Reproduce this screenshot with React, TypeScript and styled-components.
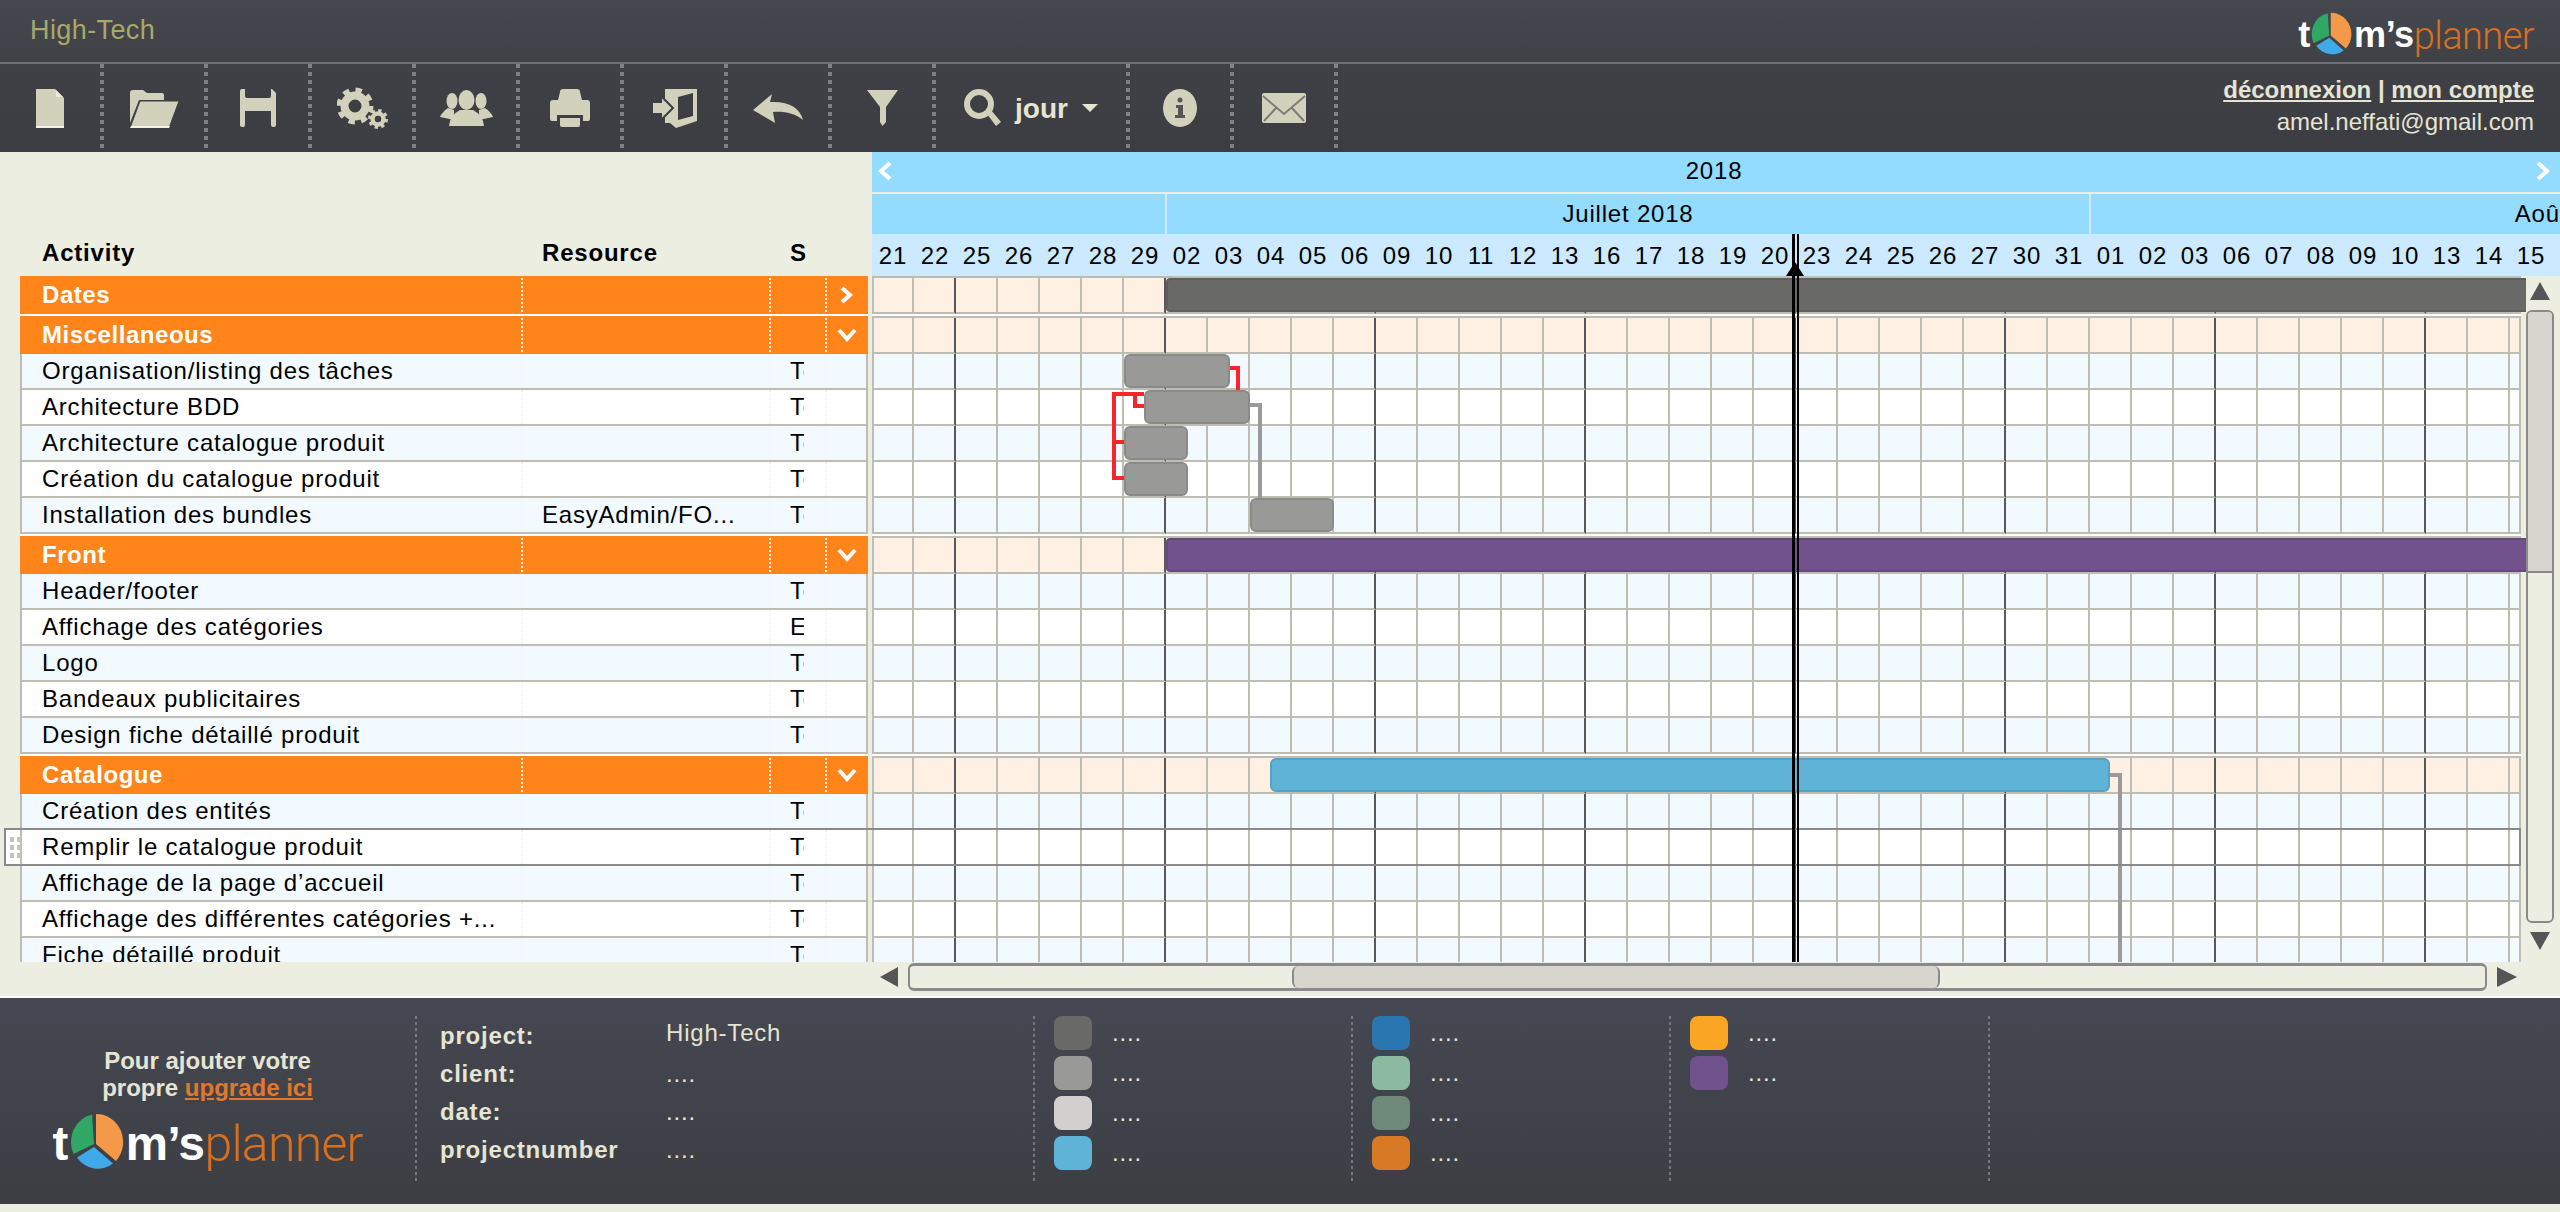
import React from "react";
import styled, { createGlobalStyle } from "styled-components";

const beige = "#edeee2";
const gridLine = "#bdbdb3";
const iconColor = "#d2d1bb";
const cream = "#e6e4d3";

const GlobalStyle = createGlobalStyle`
  html, body { margin: 0; padding: 0; background: ${beige}; }
  * { box-sizing: border-box; }
  body { font-family: "Liberation Sans", Arial, sans-serif; letter-spacing: 0.8px; }
`;

const DAYS = [
  "21", "22", "25", "26", "27", "28", "29", "02", "03", "04", "05", "06", "09", "10",
  "11", "12", "13", "16", "17", "18", "19", "20", "23", "24", "25", "26", "27", "30",
  "31", "01", "02", "03", "06", "07", "08", "09", "10", "13", "14", "15",
];

type Task = { name: string; resource?: string; status?: string };
type Section = { name: string; open: boolean; tasks: Task[] };

const SECTIONS: Section[] = [
  { name: "Dates", open: false, tasks: [] },
  {
    name: "Miscellaneous",
    open: true,
    tasks: [
      { name: "Organisation/listing des tâches" },
      { name: "Architecture BDD" },
      { name: "Architecture catalogue produit" },
      { name: "Création du catalogue produit" },
      { name: "Installation des bundles", resource: "EasyAdmin/FO..." },
    ],
  },
  {
    name: "Front",
    open: true,
    tasks: [
      { name: "Header/footer" },
      { name: "Affichage des catégories", status: "En cours" },
      { name: "Logo" },
      { name: "Bandeaux publicitaires" },
      { name: "Design fiche détaillé produit" },
    ],
  },
  {
    name: "Catalogue",
    open: true,
    tasks: [
      { name: "Création des entités" },
      { name: "Remplir le catalogue produit" },
      { name: "Affichage de la page d’accueil" },
      { name: "Affichage des différentes catégories +..." },
      { name: "Fiche détaillé produit" },
    ],
  },
];

// positions are relative to the chart area, that is the place of the bar on the canvas
const BARS = [
  { x: 294, y: 2, w: 1360, color: "#696967", border: "#5f5f5d", open: true },
  { x: 252, y: 78, w: 106, color: "#999997", border: "#8a8a88" },
  { x: 272, y: 114, w: 106, color: "#999997", border: "#8a8a88" },
  { x: 252, y: 150, w: 64, color: "#999997", border: "#8a8a88" },
  { x: 252, y: 186, w: 64, color: "#999997", border: "#8a8a88" },
  { x: 378, y: 222, w: 84, color: "#999997", border: "#8a8a88" },
  { x: 294, y: 262, w: 1360, color: "#72528d", border: "#664a7e", open: true },
  { x: 398, y: 482, w: 840, color: "#5eb3d7", border: "#55a3c4" },
];

const LEGEND = [
  ["#696967", "#999997", "#d1d0cf", "#5eb3d7"],
  ["#2a76b1", "#8bbaa1", "#6f8a7b", "#d87a25"],
  ["#fba524", "#72528d"],
  [],
];

const Page = styled.div`
  width: 2560px;
  height: 1212px;
  overflow: hidden;
  background: ${beige};
  display: flex;
  flex-direction: column;
`;

const TitleBar = styled.header`
  height: 64px;
  flex: none;
  display: flex;
  align-items: flex-start;
  justify-content: space-between;
  padding: 12px 26px 0 30px;
  background: linear-gradient(#45484f, #3f4146);
  border-bottom: 2px solid #6e7074;
`;

const ProjectName = styled.div`
  color: #a9a868;
  font-size: 27px;
  line-height: 36px;
  letter-spacing: 0.4px;
`;

const LogoWrap = styled.div<{ $size: number }>`
  display: inline-flex;
  align-items: center;
  height: ${({ $size }) => $size * 1.16}px;
  font-size: ${({ $size }) => $size}px;
  line-height: 1;
  letter-spacing: 0;
  white-space: nowrap;
  svg {
    width: 1.1em;
    height: 1.16em;
    margin: 0 0.02em 0 0.04em;
    flex: none;
  }
`;

const LogoBold = styled.span`
  color: #fff;
  font-size: 0.95em;
  font-weight: 700;
  letter-spacing: -0.01em;
  margin-top: 0.08em;
`;

const LogoLight = styled.span`
  color: #d8701f;
  font-family: Roboto, "Liberation Sans", sans-serif;
  font-weight: 300;
  letter-spacing: -0.015em;
  margin-top: 0.08em;
`;

const Logo: React.FC<{ size: number }> = ({ size }) => (
  <LogoWrap $size={size}>
    <LogoBold>t</LogoBold>
    <svg viewBox="0 0 55 58">
      <path d="M24 31L22 1.5A26 28 0 0 0 3.5 41Z" fill="#2fa866" />
      <path d="M26 31L26 1A27 28 0 0 1 46 48Z" fill="#f4994a" />
      <path d="M24 34L7 44.5A26 28 0 0 0 43 50.5Z" fill="#3fa9ea" />
    </svg>
    <LogoBold>m’s</LogoBold>
    <LogoLight>planner</LogoLight>
  </LogoWrap>
);

const Toolbar = styled.div`
  height: 88px;
  flex: none;
  display: flex;
  align-items: stretch;
  background: linear-gradient(#3f4147, #3c3d42);
`;

const ToolButton = styled.div<{ $width?: number }>`
  width: ${({ $width }) => $width ?? 104}px;
  flex: none;
  display: flex;
  align-items: center;
  justify-content: center;
  gap: 14px;
  padding-right: 4px;
  background-image: linear-gradient(#7e8083 50%, transparent 50%);
  background-size: 4px 8px;
  background-position: right top;
  background-repeat: repeat-y;
  svg { fill: ${iconColor}; flex: none; }
`;

const ViewLabel = styled.span`
  color: ${cream};
  font-size: 28px;
  font-weight: 700;
  letter-spacing: 0;
  margin-top: 2px;
`;

const Caret = styled.span`
  width: 0;
  height: 0;
  border-left: 8px solid transparent;
  border-right: 8px solid transparent;
  border-top: 8px solid ${cream};
`;

const Account = styled.div`
  margin-left: auto;
  padding: 10px 26px 0 0;
  text-align: right;
  color: ${cream};
  font-size: 24px;
  line-height: 32px;
  letter-spacing: 0;
`;

const AccountLink = styled.a`
  font-weight: 700;
  text-decoration: underline;
`;

const AccountSep = styled.span`
  font-weight: 700;
`;

const Main = styled.main`
  position: relative;
  height: 844px;
  flex: none;
  display: flex;
`;

const LeftPane = styled.div`
  width: 872px;
  flex: none;
`;

const ColumnHeads = styled.div`
  height: 124px;
  padding: 0 4px 7px 22px;
  display: grid;
  grid-template-columns: 499px 248px 56px 41px;
  align-items: end;
  font-size: 24px;
  font-weight: 700;
  line-height: 32px;
  color: #000;
`;

const HeadCell = styled.div<{ $pad?: number }>`
  padding-left: ${({ $pad }) => $pad ?? 0}px;
`;

const Tree = styled.div`
  margin-left: 20px;
  width: 848px;
  height: 686px;
  overflow: hidden;
  background: #fff;
`;

const SectionWrap = styled.div`
  margin-bottom: 2px;
`;

const GroupRow = styled.div`
  height: 38px;
  display: grid;
  grid-template-columns: 499px 248px 56px 41px;
  align-items: stretch;
  border: solid #ff851b;
  border-width: 0 2px;
  background: #ff851b;
  color: #fff;
  font-size: 24px;
  font-weight: 700;
  letter-spacing: 0.55px;
  line-height: 38px;
`;

const TaskRow = styled.div<{ $odd: boolean }>`
  height: 36px;
  display: grid;
  grid-template-columns: 499px 248px 56px 41px;
  border: solid ${gridLine};
  border-width: 0 2px 2px;
  background: ${({ $odd }) => ($odd ? "#f2faff" : "#fff")};
  color: #000;
  font-size: 24px;
  line-height: 34px;
`;

const NameCell = styled.div`
  padding-left: 20px;
  white-space: nowrap;
  overflow: hidden;
`;

const GroupDivided = styled.div`
  margin: 2px 0;
  line-height: 34px;
  border-left: 2px dotted #fff;
  display: flex;
  align-items: center;
  justify-content: center;
`;

const TaskDivided = styled.div`
  border-left: 2px dotted #f3f6f6;
  padding-left: 19px;
  white-space: nowrap;
  overflow: hidden;
`;

const StatusText = styled.div`
  width: 14px;
  overflow: hidden;
  white-space: nowrap;
`;

const RightPane = styled.div`
  width: 1688px;
  flex: none;
  display: flex;
  flex-direction: column;
`;

const YearRow = styled.div`
  height: 42px;
  flex: none;
  display: flex;
  align-items: center;
  justify-content: space-between;
  padding: 0 10px 2px 6px;
  background: #93dbff;
  border-bottom: 2px solid ${beige};
  font-size: 24px;
  line-height: 40px;
  color: #000;
`;

const MonthRow = styled.div`
  height: 40px;
  flex: none;
  display: flex;
  overflow: hidden;
  background: #93dbff;
`;

const MonthCell = styled.div<{ $width: number }>`
  width: ${({ $width }) => $width}px;
  flex: none;
  text-align: center;
  font-size: 24px;
  line-height: 40px;
  color: #000;
  & + & { border-left: 2px solid #cfeaf9; }
`;

const DayRow = styled.div`
  height: 42px;
  flex: none;
  display: flex;
  overflow: hidden;
  background: #cbe9ff;
`;

const DayCell = styled.div`
  width: 42px;
  flex: none;
  text-align: center;
  font-size: 24px;
  line-height: 44px;
  color: #000;
`;

const ChartRow = styled.div`
  height: 686px;
  flex: none;
  display: flex;
`;

const Chart = styled.div`
  position: relative;
  width: 1649px;
  height: 686px;
  overflow: hidden;
  background: #fff;
  flex: none;
`;

const Track = styled.div<{ $group?: boolean }>`
  height: ${({ $group }) => ($group ? 38 : 36)}px;
  display: flex;
  border-top: ${({ $group }) => ($group ? `2px solid ${gridLine}` : "none")};
`;

const Cell = styled.div<{ $bg: string; $week: boolean }>`
  width: 42px;
  flex: none;
  background: ${({ $bg }) => $bg};
  border-right: 2px solid ${({ $week }) => ($week ? "#58585a" : gridLine)};
  border-bottom: 2px solid ${gridLine};
  &:first-child { border-left: 2px solid ${gridLine}; }
  &:last-child { width: 11px; border-right-color: ${gridLine}; }
`;

const Bar = styled.div<{ $x: number; $y: number; $w: number; $color: string; $border: string; $open?: boolean }>`
  position: absolute;
  left: ${({ $x }) => $x}px;
  top: ${({ $y }) => $y}px;
  width: ${({ $w }) => $w}px;
  height: 34px;
  background: ${({ $color }) => $color};
  border: 2px solid ${({ $border }) => $border};
  border-right-width: ${({ $open }) => ($open ? 0 : 2)}px;
  border-radius: ${({ $open }) => ($open ? "4px 0 0 4px" : "6px")};
`;

const ChartBars = styled.div`
  position: absolute;
  left: 872px;
  top: 124px;
  width: 1654px;
  height: 686px;
`;

const Links = styled.svg`
  position: absolute;
  left: 0;
  top: 0;
  fill: none;
  stroke-width: 4;
`;

const VScroll = styled.div`
  width: 39px;
  flex: none;
  display: flex;
  flex-direction: column;
  align-items: center;
  padding: 6px 2px 12px 0;
  background: ${beige};
`;

const ArrowUp = styled.span`
  flex: none;
  width: 0;
  height: 0;
  border-left: 10px solid transparent;
  border-right: 10px solid transparent;
  border-bottom: 18px solid #555558;
`;

const ArrowDown = styled.span`
  flex: none;
  width: 0;
  height: 0;
  border-left: 10px solid transparent;
  border-right: 10px solid transparent;
  border-top: 18px solid #555558;
`;

const ArrowLeft = styled.span`
  flex: none;
  width: 0;
  height: 0;
  border-top: 10px solid transparent;
  border-bottom: 10px solid transparent;
  border-right: 18px solid #555558;
`;

const ArrowRight = styled.span`
  flex: none;
  width: 0;
  height: 0;
  border-top: 10px solid transparent;
  border-bottom: 10px solid transparent;
  border-left: 20px solid #555558;
`;

const VTrack = styled.div`
  flex: 1;
  width: 28px;
  margin: 10px 0 9px;
  border: 2px solid #8a8a8a;
  border-radius: 6px;
  overflow: hidden;
`;

const VThumb = styled.div`
  height: 261px;
  background: #d6d6ce;
  border-bottom: 2px solid #8a8a8a;
`;

const HScroll = styled.div`
  height: 34px;
  flex: none;
  display: flex;
  align-items: center;
  gap: 10px;
  padding: 0 0 4px 8px;
`;

const HTrack = styled.div`
  width: 1579px;
  height: 28px;
  flex: none;
  display: flex;
  border: 1px solid #8a8a8a;
  border-width: 3px 2px;
  border-radius: 6px;
  overflow: hidden;
`;

const HThumb = styled.div`
  width: 648px;
  margin-left: 382px;
  background: #d6d6ce;
  border: solid #8a8a8a;
  border-width: 0 2px;
  border-radius: 6px;
`;

const RowFocus = styled.div`
  position: absolute;
  left: 4px;
  top: 676px;
  width: 2517px;
  height: 38px;
  border: 2px solid #8a8a8a;
  z-index: 3;
`;

const DragHandle = styled.div`
  position: absolute;
  left: 0;
  top: 0;
  width: 14px;
  height: 34px;
  background: #fff;
  display: grid;
  grid-template-columns: 4px 4px;
  grid-auto-rows: 5px;
  column-gap: 3px;
  row-gap: 3px;
  padding: 7px 0 0 4px;
`;

const DragDot = styled.span`
  background: #c4c4be;
`;

const TodayLine = styled.div`
  position: absolute;
  left: 1792px;
  top: 82px;
  width: 7px;
  height: 728px;
  border-left: 3px solid #000;
  border-right: 2px solid #000;
  z-index: 4;
`;

const TodayMark = styled.div`
  position: absolute;
  left: 1786px;
  top: 110px;
  width: 0;
  height: 0;
  border-left: 9px solid transparent;
  border-right: 9px solid transparent;
  border-bottom: 14px solid #000;
  z-index: 4;
`;

const Footer = styled.footer`
  height: 208px;
  flex: none;
  display: flex;
  align-items: flex-start;
  border-top: 2px solid #fff;
  padding-top: 18px;
  background: linear-gradient(#454852, #3c3e43);
`;

const Promo = styled.div`
  width: 415px;
  flex: none;
  margin-top: 31px;
  display: flex;
  flex-direction: column;
  align-items: center;
  color: ${cream};
  font-size: 24px;
  font-weight: 700;
  letter-spacing: 0;
  line-height: 27px;
`;

const PromoLink = styled.a`
  color: #e4772a;
  text-decoration: underline;
`;

const PromoLogo = styled.div`
  margin-top: 12px;
`;

const FooterCol = styled.div<{ $width: number }>`
  width: ${({ $width }) => $width}px;
  height: 166px;
  flex: none;
  background-image: linear-gradient(#75777a 50%, transparent 50%);
  background-size: 2px 6px;
  background-repeat: repeat-y;
  background-position: left top;
`;

const InfoGrid = styled.div`
  display: grid;
  grid-template-columns: 226px 1fr;
  grid-auto-rows: 38px;
  padding: 1px 0 0 25px;
  color: ${cream};
  font-size: 24px;
  line-height: 38px;
`;

const InfoLabel = styled.div`
  font-weight: 700;
`;

const InfoValue = styled.div<{ $raised?: boolean }>`
  margin-top: ${({ $raised }) => ($raised ? -3 : 0)}px;
`;

const LegendList = styled.div`
  display: flex;
  flex-direction: column;
  gap: 6px;
  padding-left: 21px;
`;

const LegendItem = styled.div`
  height: 34px;
  display: flex;
  align-items: center;
  gap: 20px;
  color: ${cream};
  font-size: 24px;
`;

const Swatch = styled.span<{ $color: string }>`
  width: 38px;
  height: 34px;
  flex: none;
  border-radius: 8px;
  background: ${({ $color }) => $color};
`;

const Chevron: React.FC<{ dir: "left" | "right" | "down"; w: number; h: number }> = ({ dir, w, h }) => {
  const pts =
    dir === "left"
      ? `${w - 2},2 3,${h / 2} ${w - 2},${h - 2}`
      : dir === "right"
      ? `2,2 ${w - 3},${h / 2} 2,${h - 2}`
      : `2,2 ${w / 2},${h - 3} ${w - 2},2`;
  return (
    <svg width={w} height={h} viewBox={`0 0 ${w} ${h}`}>
      <polyline points={pts} fill="none" stroke="#fff" strokeWidth="4" />
    </svg>
  );
};

const gearTeeth = { fill: "none", stroke: iconColor };

const ToolIcons = {
  file: (
    <svg width="28" height="39" viewBox="0 0 28 39">
      <path d="M0 0H19L28 9V39H0Z" />
      <path d="M20 1V8H27Z" fill="#ecebdd" />
      <path d="M0 37H28V39H0Z" fill="#f3f2e8" />
    </svg>
  ),
  folder: (
    <svg width="50" height="39" viewBox="0 0 50 39">
      <path d="M1 4Q1 1 4 1H14L18 4H33Q35 4 35 6V11H10L1 34Z" />
      <path d="M11 12H50L40 39H1Z" stroke="#3f4146" strokeWidth="1" />
      <path d="M2 37H41L40 39H1Z" fill="#f3f2e8" />
    </svg>
  ),
  save: (
    <svg width="36" height="38" viewBox="0 0 36 38">
      <path d="M0 2Q0 0 2 0H5V7Q5 9 7 9H29Q31 9 31 7V0H32L36 4V36Q36 38 33 38Q31 38 31 36V22H5V36Q5 38 3 38Q0 38 0 36Z" />
    </svg>
  ),
  gears: (
    <svg width="51" height="42" viewBox="0 0 51 42">
      <circle cx="18" cy="19" r="10.5" fill="none" stroke={iconColor} strokeWidth="8" />
      <circle cx="18" cy="19" r="16" {...gearTeeth} strokeWidth="5" strokeDasharray="6.3 6.27" />
      <circle cx="41" cy="32" r="5.5" fill="none" stroke={iconColor} strokeWidth="4.5" />
      <circle cx="41" cy="32" r="8.5" {...gearTeeth} strokeWidth="3" strokeDasharray="3.3 3.37" />
    </svg>
  ),
  people: (
    <svg width="53" height="36" viewBox="0 0 53 36">
      <ellipse cx="12" cy="11" rx="5.500" ry="8" />
      <ellipse cx="41" cy="11" rx="5.500" ry="8" />
      <path d="M0 27Q2 22 8 18L14 20L14 30Z" />
      <path d="M53 27Q51 22 45 18L39 20L39 30Z" />
      <ellipse cx="26.500" cy="10" rx="8" ry="10" />
      <path d="M9 36Q10 25 20 20H33Q43 25 44 36Z" />
    </svg>
  ),
  printer: (
    <svg width="40" height="38" viewBox="0 0 40 38">
      <path d="M10 3Q10 0 13 0H27Q30 0 30 3L33 15H7Z" />
      <path d="M3 11H37Q40 11 40 14V30Q40 32 38 32H33V26H7V32H2Q0 32 0 30V14Q0 11 3 11Z" />
      <path d="M10 29H30V36Q30 38 28 38H12Q10 38 10 36Z" />
    </svg>
  ),
  door: (
    <svg width="45" height="40" viewBox="0 0 45 40">
      <path d="M13 1H45V33L24 40L18 35H13ZM26 9L41 5V28L26 32Z" fillRule="evenodd" />
      <path d="M0 14H9V8L21 20L9 32V26H0Z" stroke="#3d3e43" strokeWidth="2" />
    </svg>
  ),
  undo: (
    <svg width="50" height="29" viewBox="0 0 50 29">
      <path d="M0 16L19 0L17 8C36 7 47 14 50 26C42 19 30 17 20 18L22 29Z" />
    </svg>
  ),
  filter: (
    <svg width="31" height="36" viewBox="0 0 31 36">
      <path d="M0 0H31L19 17V32L15.500 36L13 32V17Z" />
    </svg>
  ),
  search: (
    <svg width="37" height="38" viewBox="0 0 37 38">
      <circle cx="15" cy="15" r="12" fill="none" stroke={iconColor} strokeWidth="6" />
      <path d="M23 25L32 37L37 33L27 21Z" />
    </svg>
  ),
  info: (
    <svg width="34" height="38" viewBox="0 0 34 38">
      <ellipse cx="17" cy="19" rx="17" ry="19" />
      <circle cx="17" cy="11" r="2.500" fill="#55565a" />
      <path d="M13 16H20V26H22V29H12V26H15V19H13Z" fill="#55565a" />
    </svg>
  ),
  mail: (
    <svg width="44" height="30" viewBox="0 0 44 30">
      <rect width="44" height="30" rx="2" />
      <path d="M1 3L22 21L43 3M2 28L15 14M42 28L29 14" fill="none" stroke="#7b7c78" strokeWidth="2" />
    </svg>
  ),
};

const App: React.FC = () => (
  <Page>
    <GlobalStyle />
    <TitleBar>
      <ProjectName>High-Tech</ProjectName>
      <Logo size={38} />
    </TitleBar>

    <Toolbar>
      <ToolButton>{ToolIcons.file}</ToolButton>
      <ToolButton>{ToolIcons.folder}</ToolButton>
      <ToolButton>{ToolIcons.save}</ToolButton>
      <ToolButton>{ToolIcons.gears}</ToolButton>
      <ToolButton>{ToolIcons.people}</ToolButton>
      <ToolButton>{ToolIcons.printer}</ToolButton>
      <ToolButton>{ToolIcons.door}</ToolButton>
      <ToolButton>{ToolIcons.undo}</ToolButton>
      <ToolButton>{ToolIcons.filter}</ToolButton>
      <ToolButton $width={194}>
        {ToolIcons.search}
        <ViewLabel>jour</ViewLabel>
        <Caret />
      </ToolButton>
      <ToolButton>{ToolIcons.info}</ToolButton>
      <ToolButton>{ToolIcons.mail}</ToolButton>
      <Account>
        <div>
          <AccountLink>déconnexion</AccountLink> <AccountSep>|</AccountSep> <AccountLink>mon compte</AccountLink>
        </div>
        <div>amel.neffati@gmail.com</div>
      </Account>
    </Toolbar>

    <Main>
      <LeftPane>
        <ColumnHeads>
          <HeadCell $pad={20}>Activity</HeadCell>
          <HeadCell $pad={21}>Resource</HeadCell>
          <HeadCell $pad={21}>S</HeadCell>
          <HeadCell />
        </ColumnHeads>
        <Tree>
          {SECTIONS.map((section) => (
            <SectionWrap key={section.name}>
              <GroupRow>
                <NameCell>{section.name}</NameCell>
                <GroupDivided />
                <GroupDivided />
                <GroupDivided>
                  {section.open ? <Chevron dir="down" w={20} h={14} /> : <Chevron dir="right" w={13} h={18} />}
                </GroupDivided>
              </GroupRow>
              {section.tasks.map((task, i) => (
                <TaskRow key={task.name} $odd={i % 2 === 0}>
                  <NameCell>{task.name}</NameCell>
                  <TaskDivided>{task.resource}</TaskDivided>
                  <TaskDivided>
                    <StatusText>{task.status ?? "Terminé"}</StatusText>
                  </TaskDivided>
                  <TaskDivided />
                </TaskRow>
              ))}
            </SectionWrap>
          ))}
        </Tree>
      </LeftPane>

      <RightPane>
        <YearRow>
          <Chevron dir="left" w={14} h={20} />
          <span>2018</span>
          <Chevron dir="right" w={14} h={20} />
        </YearRow>
        <MonthRow>
          <MonthCell $width={293} />
          <MonthCell $width={924}>Juillet 2018</MonthCell>
          <MonthCell $width={966}>Août 2018</MonthCell>
        </MonthRow>
        <DayRow>
          {DAYS.map((d, i) => (
            <DayCell key={i}>{d}</DayCell>
          ))}
        </DayRow>
        <ChartRow>
          <Chart>
            {SECTIONS.map((section) => (
              <SectionWrap key={section.name}>
                <Track $group>
                  {DAYS.map((_, i) => (
                    <Cell key={i} $bg="#fef0e3" $week={i % 5 === 1} />
                  ))}
                </Track>
                {section.tasks.map((task, r) => (
                  <Track key={task.name}>
                    {DAYS.map((_, i) => (
                      <Cell key={i} $bg={r % 2 === 0 ? "#f2faff" : "#fff"} $week={i % 5 === 1} />
                    ))}
                  </Track>
                ))}
              </SectionWrap>
            ))}
            <Links width="1649" height="686">
              <path d="M358 92H366V114" stroke="#f9252d" />
              <path d="M272 118H242V202H252M242 166H252M272 130H263V118" stroke="#f9252d" />
              <path d="M378 129H388V222" stroke="#9a9a9a" />
              <path d="M1238 499H1248V686" stroke="#9a9a9a" />
            </Links>
          </Chart>
          <VScroll>
            <ArrowUp />
            <VTrack>
              <VThumb />
            </VTrack>
            <ArrowDown />
          </VScroll>
        </ChartRow>
        <HScroll>
          <ArrowLeft />
          <HTrack>
            <HThumb />
          </HTrack>
          <ArrowRight />
        </HScroll>
      </RightPane>

      <ChartBars>
        {BARS.map((b, i) => (
          <Bar key={i} $x={b.x} $y={b.y} $w={b.w} $color={b.color} $border={b.border} $open={b.open} />
        ))}
      </ChartBars>

      <RowFocus>
        <DragHandle>
          {Array.from({ length: 6 }).map((_, i) => (
            <DragDot key={i} />
          ))}
        </DragHandle>
      </RowFocus>
      <TodayLine />
      <TodayMark />
    </Main>

    <Footer>
      <Promo>
        <div>Pour ajouter votre</div>
        <div>
          propre <PromoLink>upgrade ici</PromoLink>
        </div>
        <PromoLogo>
          <Logo size={50} />
        </PromoLogo>
      </Promo>
      <FooterCol $width={618}>
        <InfoGrid>
          <InfoLabel>project:</InfoLabel>
          <InfoValue $raised>High-Tech</InfoValue>
          <InfoLabel>client:</InfoLabel>
          <InfoValue>....</InfoValue>
          <InfoLabel>date:</InfoLabel>
          <InfoValue>....</InfoValue>
          <InfoLabel>projectnumber</InfoLabel>
          <InfoValue>....</InfoValue>
        </InfoGrid>
      </FooterCol>
      {LEGEND.map((col, c) => (
        <FooterCol key={c} $width={c === 2 ? 319 : 318}>
          <LegendList>
            {col.map((color) => (
              <LegendItem key={color}>
                <Swatch $color={color} />
                ....
              </LegendItem>
            ))}
          </LegendList>
        </FooterCol>
      ))}
    </Footer>
  </Page>
);

export default App;
